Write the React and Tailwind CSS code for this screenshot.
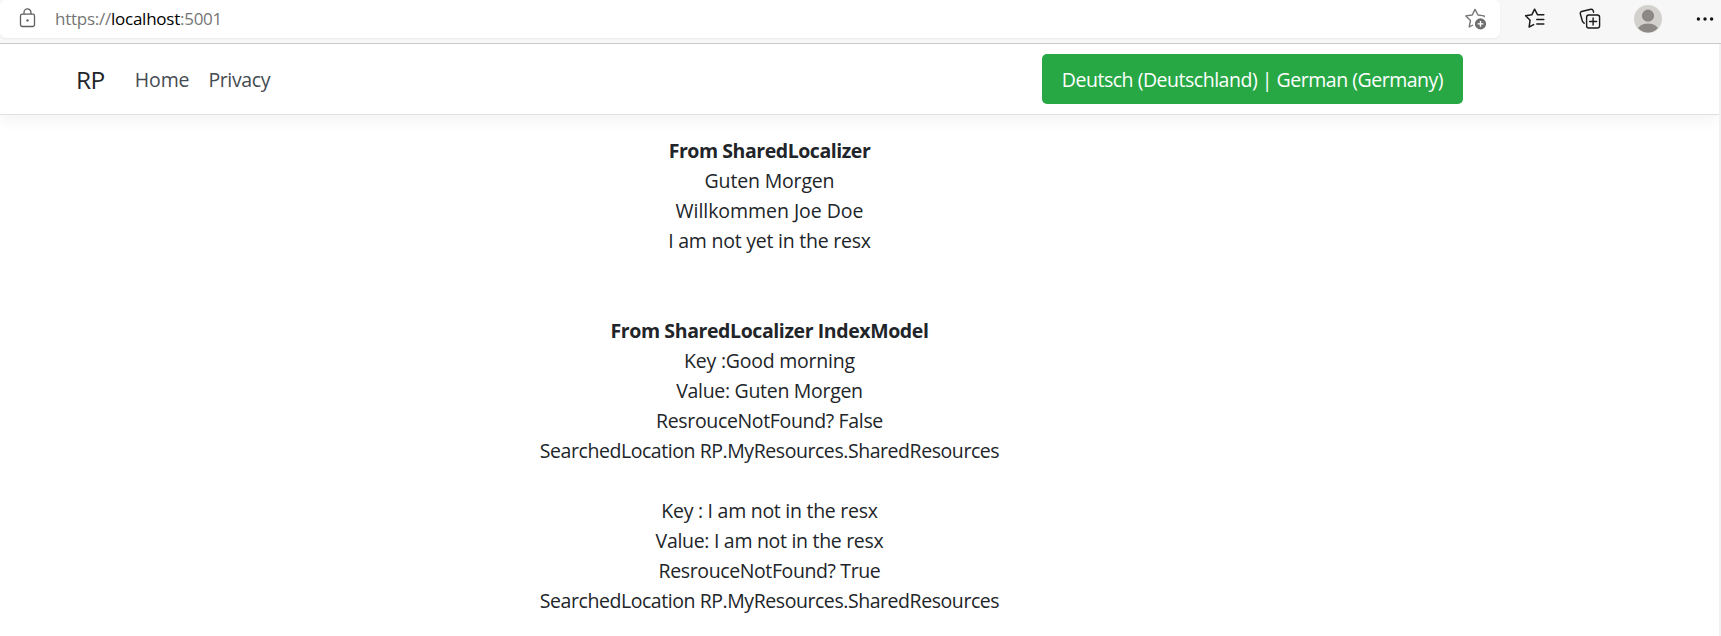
import React from 'react';

const sharedLines = [
  { text: 'From SharedLocalizer', cls: 'font-bold tracking-[-0.45px]' },
  { text: 'Guten Morgen', cls: 'tracking-[-0.17px]' },
  { text: 'Willkommen Joe Doe', cls: 'tracking-[-0.04px]' },
  { text: 'I am not yet in the resx', cls: 'tracking-[-0.23px]' },
];

const foundLines = [
  { text: 'From SharedLocalizer IndexModel', cls: 'font-bold tracking-[-0.4px]' },
  { text: 'Key :Good morning', cls: 'tracking-[-0.23px]' },
  { text: 'Value: Guten Morgen', cls: 'tracking-[-0.3px]' },
  { text: 'ResrouceNotFound? False', cls: 'tracking-[-0.34px]' },
  { text: 'SearchedLocation RP.MyResources.SharedResources', cls: 'tracking-[-0.44px]' },
];

const missingLines = [
  { text: 'Key : I am not in the resx', cls: 'tracking-[-0.27px]' },
  { text: 'Value: I am not in the resx', cls: 'tracking-[-0.3px]' },
  { text: 'ResrouceNotFound? True', cls: 'tracking-[-0.39px]' },
  { text: 'SearchedLocation RP.MyResources.SharedResources', cls: 'tracking-[-0.44px]' },
];

function Lines({ items }) {
  return (
    <div>
      {items.map(({ text, cls }) => (
        <p key={text} className={cls}>{text}</p>
      ))}
    </div>
  );
}

function LockIcon() {
  return (
    <svg width="18" height="20" viewBox="0 0 18 20" fill="none" stroke="#5f5f5f" strokeWidth="1.3">
      <rect x="1.5" y="6.2" width="14" height="12.3" rx="1.8" />
      <path d="M5 6.2V4.4a3.5 3.5 0 0 1 7 0v1.8" />
      <circle cx="8.5" cy="12.4" r="1.2" fill="#5f5f5f" stroke="none" />
    </svg>
  );
}

function StarPlusIcon() {
  return (
    <svg width="24" height="24" viewBox="0 0 24 24" fill="none">
      <path
        d="M21.2 10.2V8.9l-6.2-.9L12 2.4 9.2 8l-6.4.9 4.7 4.5-1.3 6.6 3.9-2"
        stroke="#767676"
        strokeWidth="1.4"
        strokeLinejoin="round"
      />
      <circle cx="17.5" cy="16.9" r="5.6" fill="#6e6e6e" />
      <path d="M17.5 14v5.8M14.6 16.9h5.8" stroke="#fff" strokeWidth="1.4" />
    </svg>
  );
}

function FavoritesIcon() {
  return (
    <svg width="24" height="24" viewBox="0 0 24 24" fill="none" stroke="#1b1b1b" strokeWidth="1.5" strokeLinecap="round" strokeLinejoin="round">
      <path d="M20.8 7.8h-6.2L11.6 2.2 8.8 7.8l-6.2.9 4.5 4.5-1 6.8 4.6-2.4" />
      <path d="M13.8 12.4h7M13.8 17h7" />
    </svg>
  );
}

function CollectionsIcon() {
  return (
    <svg width="24" height="24" viewBox="0 0 24 24" fill="none" stroke="#1b1b1b" strokeWidth="1.4" strokeLinecap="round" strokeLinejoin="round">
      <path d="M15.6 5.2l-.5-1.7a1.8 1.8 0 0 0-2.2-1.2L3.6 4.5a1.8 1.8 0 0 0-1.3 2.2l2.2 7.8 1.7 1.7" />
      <rect x="8.6" y="8" width="13" height="13" rx="2.2" />
      <path d="M15.1 11v7M11.6 14.5h7" />
    </svg>
  );
}

function ProfileIcon() {
  return (
    <svg width="28" height="28" viewBox="0 0 28 28">
      <defs>
        <clipPath id="avatar">
          <circle cx="14" cy="14" r="13.5" />
        </clipPath>
      </defs>
      <circle cx="14" cy="14" r="14" fill="#d3d1ce" />
      <g clipPath="url(#avatar)" fill="#8c8886">
        <circle cx="14" cy="10.7" r="6.1" />
        <ellipse cx="14" cy="26.6" rx="11" ry="8.2" />
      </g>
    </svg>
  );
}

function MoreIcon() {
  return (
    <svg width="18" height="6" viewBox="0 0 18 6" fill="#111">
      <circle cx="2.4" cy="3" r="1.7" />
      <circle cx="9" cy="3" r="1.7" />
      <circle cx="15.6" cy="3" r="1.7" />
    </svg>
  );
}

function BrowserBar() {
  return (
    <div className="flex h-11 items-start border-b border-[#cbcbcb] bg-[#f7f7f7]">
      <div className="flex h-[38px] w-[1500px] items-center rounded-md bg-white pl-[19px] pr-[13px] shadow-[0_1px_2px_rgba(0,0,0,0.05)]">
        <div className="-mt-0.5">
          <LockIcon />
        </div>
        <div className="ml-[18px] text-[17px] tracking-[-0.25px] text-[#757575]">
          https://<span className="text-black">localhost</span>:5001
        </div>
        <div className="ml-auto">
          <StarPlusIcon />
        </div>
      </div>
      <div className="flex h-[38px] flex-1 items-center pl-[23px]">
        <FavoritesIcon />
        <div className="ml-[31px]">
          <CollectionsIcon />
        </div>
        <div className="ml-[32px]">
          <ProfileIcon />
        </div>
        <div className="ml-[34px]">
          <MoreIcon />
        </div>
      </div>
    </div>
  );
}

function Navbar() {
  return (
    <header className="flex h-[71px] items-center border-b border-[#dee2e6] bg-white pl-[76px] shadow-[0_5px_15px_rgba(0,0,0,0.05)]">
      <a className="pt-[2px] text-[24.5px] tracking-[-0.5px] text-[#212529]">RP</a>
      <nav className="ml-[30px] flex gap-[19px] pt-[2px] text-[#454b51]">
        <a className="tracking-[-0.15px]">Home</a>
        <a className="tracking-[-0.35px]">Privacy</a>
      </nav>
      <button className="ml-auto mr-[256px] h-[50px] w-[421px] rounded-[5px] bg-[#28a745] pt-[2px] tracking-[-0.48px] text-white">
        Deutsch (Deutschland) | German (Germany)
      </button>
    </header>
  );
}

export default function App() {
  return (
    <div className="h-[636px] overflow-hidden bg-white font-['Open_Sans',sans-serif] text-[19.5px] font-normal leading-[30px] text-[#212529]">
      <BrowserBar />
      <div className="flex h-[592px]">
        <div className="w-[1719px] overflow-hidden">
          <Navbar />
          <main className="flex w-[1539px] flex-col pt-[21px] text-center">
            <Lines items={sharedLines} />
            <div className="mt-[60px]">
              <Lines items={foundLines} />
            </div>
            <div className="mt-[30px]">
              <Lines items={missingLines} />
            </div>
          </main>
        </div>
        <div className="flex-1 bg-[#f1f1f1]" />
      </div>
    </div>
  );
}
